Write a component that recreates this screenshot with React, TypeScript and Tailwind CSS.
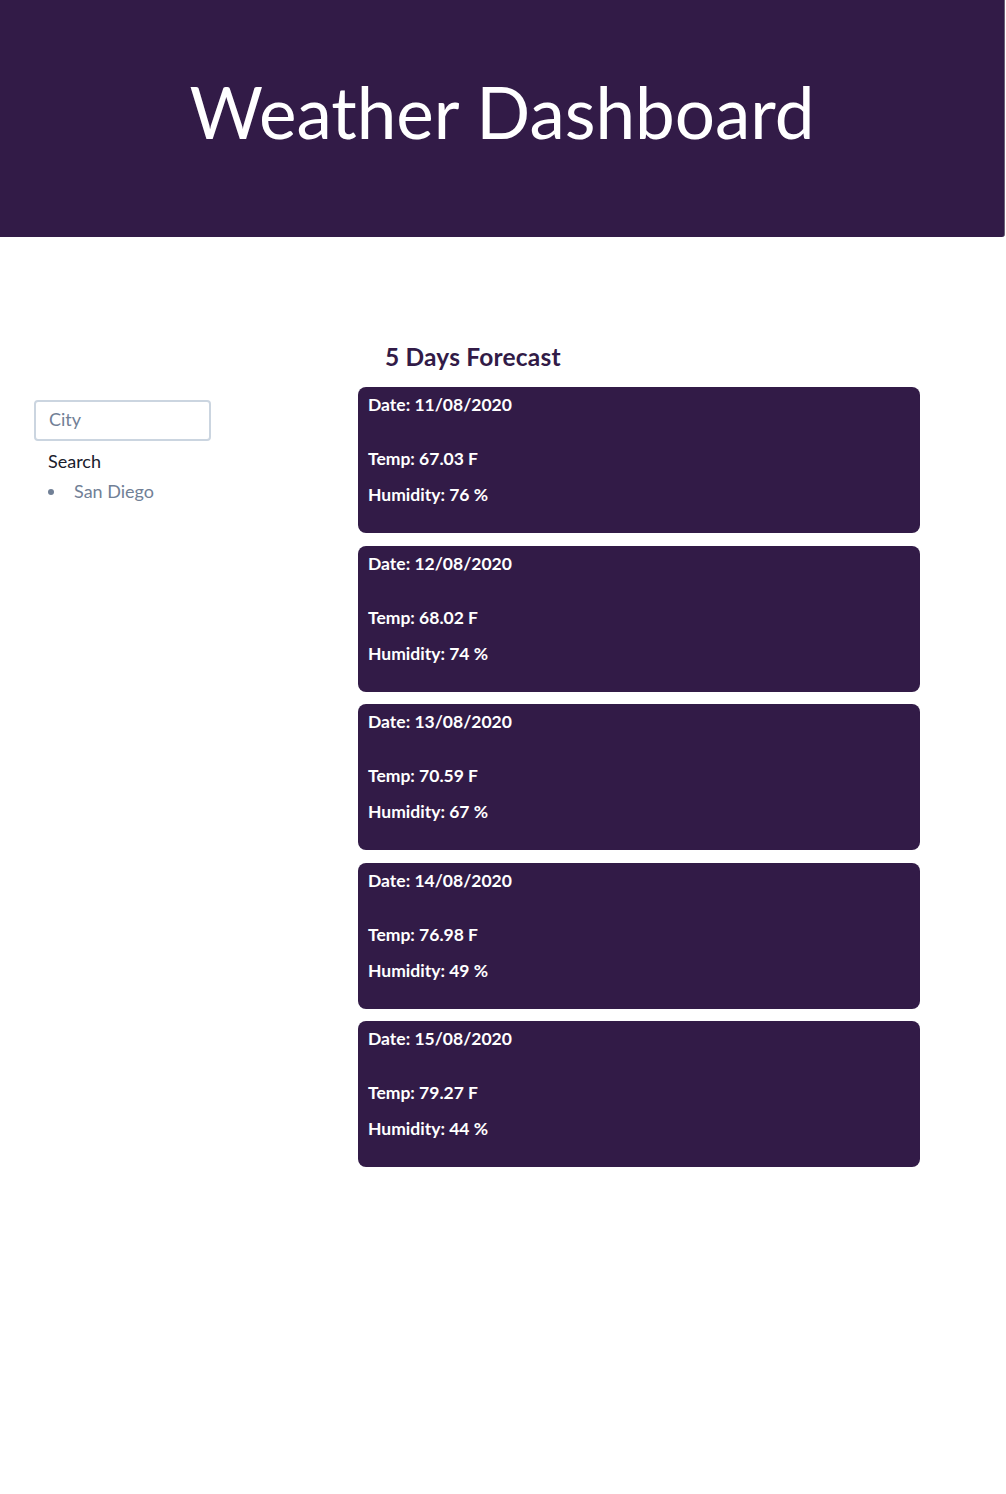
const forecast = [
  { date: "11/08/2020", temp: "67.03", humidity: 76 },
  { date: "12/08/2020", temp: "68.02", humidity: 74 },
  { date: "13/08/2020", temp: "70.59", humidity: 67 },
  { date: "14/08/2020", temp: "76.98", humidity: 49 },
  { date: "15/08/2020", temp: "79.27", humidity: 44 },
];

const App = () => {
  return (
    <div
      className="min-h-[1494px] bg-white"
      style={{ fontFamily: '"Trebuchet MS", Lato, "Open Sans", sans-serif' }}
    >
      <header className="w-[1005px] h-[237px] bg-[#321b47] rounded-br-[3px] border-r border-[#6b6175] flex items-center justify-center">
        <h1 className="text-[71px] leading-none text-white -mt-[14px]">
          Weather Dashboard
        </h1>
      </header>

      <main className="flex pt-[104px]">
        <aside className="w-[358px] pl-[34px] pt-[59px]">
          <input
            type="text"
            placeholder="City"
            className="w-[177px] h-[41px] border-2 border-[#cbd5e0] rounded-[4px] px-[13px] pb-[4px] text-[18px] text-[#4a5568] placeholder-[#718096] outline-none"
          />
          <button className="block mt-[7px] px-[14px] text-[18px] leading-[27px] text-[#1a202c]">
            Search
          </button>
          <ul className="list-disc list-inside pl-[14px] mt-[3px] text-[18px] leading-[27px] text-[#718096]">
            <li>
              <span className="ml-[1px]">San Diego</span>
            </li>
          </ul>
        </aside>

        <section className="w-[562px]">
          <h2 className="ml-[27px] text-[24.5px] leading-[32px] font-bold text-[#321b47] tracking-[0.2px]">
            5 Days Forecast
          </h2>
          <div className="mt-[14px] flex flex-col gap-[12.5px]">
            {forecast.map((day) => (
              <div
                key={day.date}
                className="bg-[#321b47] rounded-[8px] px-[10px] pt-[4px] pb-[25px] text-white text-[17.5px] leading-[27px] font-bold"
              >
                <p className="mb-[27px]">Date: {day.date}</p>
                <p className="mb-[9px]">Temp: {day.temp} F</p>
                <p>Humidity: {day.humidity} %</p>
              </div>
            ))}
          </div>
        </section>
      </main>
    </div>
  );
};

export default App;
